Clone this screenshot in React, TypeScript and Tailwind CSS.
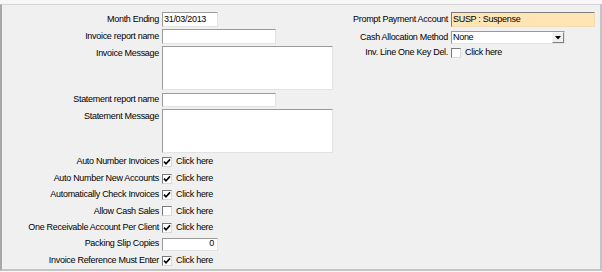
import React from 'react';

const font = { fontFamily: '"Liberation Sans", Arial, sans-serif' };

function Check({ checked }: { checked?: boolean }) {
  return (
    <span className="flex h-[10px] w-[10px] shrink-0 items-center justify-center border border-t-[#7a7a7a] border-l-[#7a7a7a] border-r-[#d8d8d8] border-b-[#d8d8d8] bg-white">
      {checked && (
        <svg width="8" height="8" viewBox="0 0 8 8">
          <path d="M1 3.6 L3 5.8 L7 1.4" fill="none" stroke="#000" strokeWidth="1.6" />
        </svg>
      )}
    </span>
  );
}

function CheckRow({ label, checked }: { label: string; checked?: boolean }) {
  return (
    <div className="flex h-[16.4px] items-center">
      <div className="w-[157px] text-right">{label}</div>
      <div className="ml-[3px] flex items-center gap-[4px]">
        <Check checked={checked} />
        <span>Click here</span>
      </div>
    </div>
  );
}

const box =
  'border border-t-[#9a9a9a] border-l-[#9a9a9a] border-r-[#e2e2e2] border-b-[#e2e2e2] bg-white';

export default function App() {
  const checks = [
    { label: 'Auto Number Invoices', checked: true },
    { label: 'Auto Number New Accounts', checked: true },
    { label: 'Automatically Check Invoices', checked: true },
    { label: 'Allow Cash Sales', checked: false },
    { label: 'One Receivable Account Per Client', checked: true },
  ];

  return (
    <div
      className="h-[272px] w-[602px] whitespace-nowrap bg-[#f7f7f7] pt-[4px] text-[9px] tracking-[-0.3px] text-black"
      style={font}
    >
      <div className="flex h-[267px] w-[602px] border-b-2 border-l-2 border-r-2 border-t border-b-[#c4c4c4] border-l-[#a8a8a8] border-r-[#c4c4c4] border-t-[#d4d4d4] bg-[#f0f0f0] pt-[7px]">
        {/* left column */}
        <div className="flex w-[340px] flex-col">
          <div className="flex h-[15px] items-center">
            <div className="w-[157px] text-right">Month Ending</div>
            <div className={`ml-[3px] flex h-[15px] w-[56px] items-center px-[1px] ${box}`}>31/03/2013</div>
          </div>
          <div className="mt-[2px] flex h-[15px] items-center">
            <div className="w-[157px] text-right">Invoice report name</div>
            <div className={`ml-[3px] h-[15px] w-[114px] ${box}`} />
          </div>
          <div className="mt-[2px] flex items-start">
            <div className="w-[157px] pt-[1px] text-right leading-[12px]">Invoice Message</div>
            <div className={`ml-[3px] h-[44px] w-[171px] ${box}`} />
          </div>
          <div className="mt-[2px] flex h-[15px] items-center">
            <div className="w-[157px] text-right">Statement report name</div>
            <div className={`ml-[3px] h-[14px] w-[114px] ${box}`} />
          </div>
          <div className="mt-[2px] flex items-start">
            <div className="w-[157px] pt-[1px] text-right leading-[12px]">Statement Message</div>
            <div className={`ml-[3px] h-[44px] w-[171px] ${box}`} />
          </div>
          <div className="mt-[1px]">
            {checks.map((c) => (
              <CheckRow key={c.label} label={c.label} checked={c.checked} />
            ))}
            <div className="flex h-[16.4px] items-center">
              <div className="w-[157px] text-right">Packing Slip Copies</div>
              <div className={`ml-[3px] flex h-[13px] w-[56px] items-center justify-end pr-[3px] ${box}`}>0</div>
            </div>
            <CheckRow label="Invoice Reference Must Enter" checked />
          </div>
        </div>

        {/* right column */}
        <div className="flex flex-col">
          <div className="flex h-[15px] items-center">
            <div className="w-[106px] text-right">Prompt Payment Account</div>
            <div className="ml-[3px] flex h-[15px] w-[144px] items-center border border-b-[#f2dcb4] border-l-[#7c7c7c] border-r-[#f2dcb4] border-t-[#7c7c7c] bg-[#ffe4b4] px-[1px]">
              SUSP : Suspense
            </div>
          </div>
          <div className="mt-[4px] flex h-[13px] items-center">
            <div className="w-[106px] text-right">Cash Allocation Method</div>
            <div className={`ml-[3px] flex h-[13px] w-[114px] items-center justify-between ${box}`}>
              <span className="pl-[1px]">None</span>
              <span className="flex h-[11px] w-[12px] items-center justify-center border border-b-[#808080] border-l-[#f8f8f8] border-r-[#808080] border-t-[#f8f8f8] bg-[#f0f0f0]">
                <svg width="6" height="4" viewBox="0 0 6 4">
                  <path d="M0 0 H6 L3 3.5 Z" fill="#000" />
                </svg>
              </span>
            </div>
          </div>
          <div className="mt-[1px] flex h-[16px] items-center">
            <div className="w-[106px] text-right">Inv. Line One Key Del.</div>
            <div className="ml-[3px] flex items-center gap-[4px]">
              <Check />
              <span>Click here</span>
            </div>
          </div>
        </div>
      </div>
    </div>
  );
}
